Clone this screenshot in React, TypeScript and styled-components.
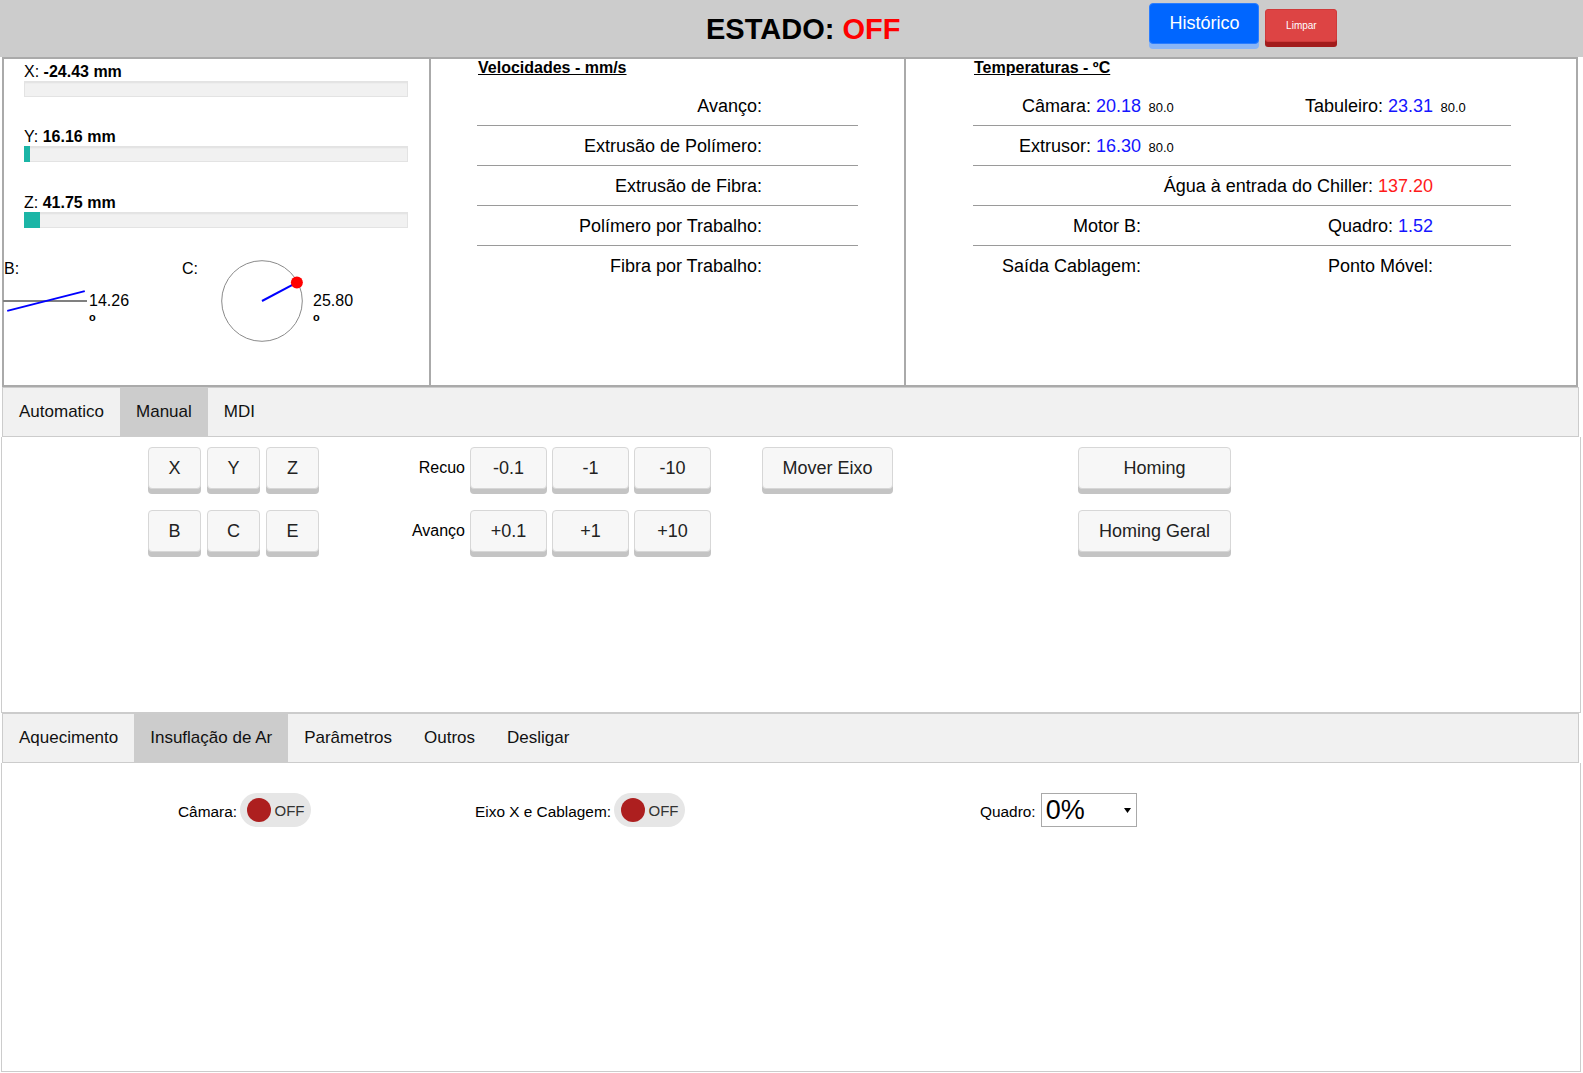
import React from "react";
import styled, { createGlobalStyle } from "styled-components";

const GlobalStyle = createGlobalStyle`
  html, body { margin: 0; padding: 0; background: #ffffff; overflow: hidden; }
  body { font-family: "Liberation Sans", Arial, sans-serif; color: #000; }
  *, *::before, *::after { box-sizing: border-box; }
  button { font-family: "Liberation Sans", Arial, sans-serif; cursor: pointer; }
`;

const Page = styled.div`
  width: 1583px;
`;

/* ---------- header ---------- */
const Header = styled.header`
  height: 57px;
  background: #cccccc;
  display: flex;
  align-items: flex-start;
  padding-left: 706px;
`;
const Title = styled.h1`
  margin: 13px 0 0;
  font-size: 29px;
  font-weight: bold;
  line-height: normal;
  white-space: nowrap;
`;
const Status = styled.span`
  color: #ff0000;
`;
const HistoryButton = styled.button`
  margin: 3px 0 0 249px;
  width: 110px;
  height: 41px;
  padding: 0;
  border: 1px solid #2a7dff;
  border-radius: 4px;
  background: #0066ff;
  color: #ffffff;
  font-size: 18px;
  box-shadow: 0 5px 0 #89b5f6;
`;
const ClearButton = styled.button`
  margin: 9px 0 0 6px;
  width: 72px;
  height: 33px;
  padding: 0;
  border: 1px solid #cf3a3a;
  border-radius: 3px;
  background: #dd4444;
  color: #ffffff;
  font-size: 10px;
  box-shadow: 0 5px 0 #a21c1c;
`;

/* ---------- top panels ---------- */
const Panels = styled.section`
  display: flex;
  margin-left: 2px;
  width: 1576px;
  height: 330px;
  border: 2px solid #aaaaaa;
`;
const Panel = styled.div<{ $width: number; $padLeft: number; $last?: boolean }>`
  flex: none;
  width: ${(p) => p.$width}px;
  padding-left: ${(p) => p.$padLeft}px;
  border-right: ${(p) => (p.$last ? "none" : "2px solid #aaaaaa")};
`;

const AxisList = styled.div`
  padding: 3.5px 0 0 20px;
  display: flex;
  flex-direction: column;
  gap: 31.5px;
`;
const AxisItem = styled.div`
  display: flex;
  flex-direction: column;
`;
const AxisLabel = styled.div`
  font-size: 16px;
  line-height: 18px;
  height: 18px;
  b {
    font-weight: bold;
  }
`;
const Track = styled.div`
  width: 384px;
  height: 16px;
  background: #f1f1f1;
  box-shadow: inset 0 0 0 1px #e3e3e3, inset 0 2px 2px rgba(0, 0, 0, 0.07);
`;
const Fill = styled.div`
  height: 100%;
  background: #1bb5a6;
`;

const GaugeRow = styled.div`
  display: flex;
  align-items: flex-start;
  margin-top: 32.5px;
`;
const LinearGauge = styled.div`
  width: 178px;
  display: flex;
  flex-direction: column;
`;
const GaugeLabel = styled.div<{ $width?: number }>`
  font-size: 16px;
  line-height: 18px;
  width: ${(p) => (p.$width ? `${p.$width}px` : "auto")};
  flex: none;
`;
const GaugeBody = styled.div`
  display: flex;
  align-items: flex-start;
  margin-top: 3px;
  margin-left: -1px;
`;
const GaugeValue = styled.div<{ $top: number; $left: number }>`
  font-size: 16px;
  line-height: 18px;
  margin-top: ${(p) => p.$top}px;
  margin-left: ${(p) => p.$left}px;
`;
const Degree = styled.span`
  display: block;
  font-size: 11px;
  font-weight: bold;
  line-height: 10px;
  padding-top: 2px;
`;
const RotaryGauge = styled.div`
  display: flex;
  align-items: flex-start;
`;

const PanelTitle = styled.div`
  margin-left: 1px;
  font-size: 16px;
  font-weight: bold;
  line-height: 18px;
  text-decoration: underline;
`;
const DataTable = styled.div<{ $width: number }>`
  margin-top: 9px;
  width: ${(p) => p.$width}px;
`;
const SpeedRow = styled.div<{ $last?: boolean }>`
  display: grid;
  grid-template-columns: 285px 1fr;
  height: 40px;
  padding: 9.5px 0;
  font-size: 18px;
  line-height: 20px;
  border-bottom: ${(p) => (p.$last ? "none" : "1px solid #9a9a9a")};
`;
const RightCell = styled.div<{ $span?: string }>`
  text-align: right;
  white-space: nowrap;
  grid-column: ${(p) => p.$span || "auto"};
`;
const TempRow = styled.div<{ $last?: boolean }>`
  display: grid;
  grid-template-columns: 168px 60px 232px 1fr;
  align-items: baseline;
  height: 40px;
  padding: 9.5px 0;
  font-size: 18px;
  line-height: 20px;
  border-bottom: ${(p) => (p.$last ? "none" : "1px solid #9a9a9a")};
`;
const SetPoint = styled.div`
  font-size: 13px;
  line-height: 14px;
  padding-left: 7.5px;
`;
const Value = styled.span<{ $color: string }>`
  color: ${(p) => p.$color};
`;

/* ---------- tabs ---------- */
const TabBar = styled.nav`
  display: flex;
  margin-left: 2px;
  width: 1577px;
  height: 50px;
  border: 1px solid #cccccc;
  background: #f1f1f1;
`;
const Tab = styled.button<{ $active?: boolean }>`
  height: 48px;
  padding: 0 16px;
  border: none;
  background: ${(p) => (p.$active ? "#cccccc" : "transparent")};
  font-size: 17px;
  line-height: 48px;
  color: #111;
`;
const TabContent = styled.div<{ $height: number }>`
  margin-left: 1px;
  width: 1580px;
  height: ${(p) => p.$height}px;
  border: 1px solid #cccccc;
  border-top: none;
`;
const ManualLayout = styled.div`
  display: flex;
  align-items: flex-start;
  padding: 10px 0 0 146px;
`;
const AxisGrid = styled.div`
  display: grid;
  grid-template-columns: repeat(3, 53px);
  column-gap: 6px;
  row-gap: 21px;
`;
const JogGrid = styled.div`
  margin-left: 92px;
  display: grid;
  grid-template-columns: 54px repeat(3, 77px);
  column-gap: 5px;
  row-gap: 21px;
  align-items: center;
`;
const JogLabel = styled.div`
  text-align: right;
  font-size: 16px;
`;
const KeyButton = styled.button<{ $width?: number }>`
  width: ${(p) => (p.$width ? `${p.$width}px` : "100%")};
  height: 42px;
  padding: 0;
  border: 1px solid #d7d7d7;
  border-radius: 4px;
  background: #f7f7f7;
  box-shadow: 0 5px 0 #c4c4c4;
  font-size: 18px;
  color: #222;
`;
const SoloColumn = styled.div<{ $gap: number }>`
  margin-left: ${(p) => p.$gap}px;
  display: flex;
  flex-direction: column;
  gap: 21px;
`;

const AirLayout = styled.div`
  display: grid;
  grid-template-columns: 297px 505px auto;
  align-items: start;
  padding: 30px 0 0 176px;
`;
const ControlGroup = styled.div<{ $gap: number }>`
  display: flex;
  align-items: center;
  gap: ${(p) => p.$gap}px;
`;
const ControlLabel = styled.span`
  font-size: 15.4px;
  white-space: nowrap;
  padding-top: 3px;
`;
const Toggle = styled.div`
  width: 71px;
  height: 34px;
  border-radius: 17px;
  background: #e6e6e6;
  display: flex;
  align-items: center;
  padding-left: 7px;
`;
const Knob = styled.span`
  width: 24px;
  height: 24px;
  border-radius: 50%;
  background: #ad1f1f;
  flex: none;
`;
const ToggleText = styled.span`
  margin-left: 3.5px;
  font-size: 15px;
  color: #333;
`;
const SelectBox = styled.div`
  width: 96px;
  height: 34px;
  border: 1px solid #a9a9a9;
  background: #fff;
  display: flex;
  align-items: center;
  justify-content: space-between;
  padding: 0 5px 0 4px;
  font-size: 27px;
`;

const axes = [
  { name: "X", value: "-24.43 mm", fill: 0 },
  { name: "Y", value: "16.16 mm", fill: 6 },
  { name: "Z", value: "41.75 mm", fill: 16 },
];

const speeds = [
  "Avanço:",
  "Extrusão de Polímero:",
  "Extrusão de Fibra:",
  "Polímero por Trabalho:",
  "Fibra por Trabalho:",
];

const BLUE = "#1515ff";
const RED = "#ff1a1a";

export default function App() {
  const cAngle = (28 * Math.PI) / 180;
  return (
    <Page>
      <GlobalStyle />
      <Header>
        <Title>
          ESTADO: <Status>OFF</Status>
        </Title>
        <HistoryButton>Histórico</HistoryButton>
        <ClearButton>Limpar</ClearButton>
      </Header>

      <Panels>
        <Panel $width={427} $padLeft={0}>
          <AxisList>
            {axes.map((a) => (
              <AxisItem key={a.name}>
                <AxisLabel>
                  {a.name}: <b>{a.value}</b>
                </AxisLabel>
                <Track>
                  <Fill style={{ width: `${a.fill}px` }} />
                </Track>
              </AxisItem>
            ))}
          </AxisList>
          <GaugeRow>
            <LinearGauge>
              <GaugeLabel>B:</GaugeLabel>
              <GaugeBody>
                <svg width="85" height="40" viewBox="0 0 85 40">
                  <line x1="0" y1="20" x2="84" y2="20" stroke="#808080" strokeWidth="2" />
                  <line
                    x1="3"
                    y1="20"
                    x2="83"
                    y2="20"
                    stroke="#0000ff"
                    strokeWidth="2"
                    transform="rotate(-14.26 43 20)"
                  />
                </svg>
                <GaugeValue $top={11} $left={1}>
                  14.26
                  <Degree>o</Degree>
                </GaugeValue>
              </GaugeBody>
            </LinearGauge>
            <RotaryGauge>
              <GaugeLabel $width={39}>C:</GaugeLabel>
              <svg width="82" height="82" viewBox="0 0 82 82">
                <circle cx="41" cy="41" r="40.3" fill="none" stroke="#8a8a8a" strokeWidth="1" />
                <line
                  x1="41"
                  y1="41"
                  x2={41 + 35 * Math.cos(cAngle)}
                  y2={41 - 35 * Math.sin(cAngle)}
                  stroke="#0000ff"
                  strokeWidth="2"
                />
                <circle
                  cx={41 + 39.5 * Math.cos(cAngle)}
                  cy={41 - 39.5 * Math.sin(cAngle)}
                  r="6"
                  fill="#ff0000"
                />
              </svg>
              <GaugeValue $top={32} $left={10}>
                25.80
                <Degree>o</Degree>
              </GaugeValue>
            </RotaryGauge>
          </GaugeRow>
        </Panel>

        <Panel $width={475} $padLeft={46}>
          <PanelTitle>Velocidades - mm/s</PanelTitle>
          <DataTable $width={381}>
            {speeds.map((s, i) => (
              <SpeedRow key={s} $last={i === speeds.length - 1}>
                <RightCell>{s}</RightCell>
                <div />
              </SpeedRow>
            ))}
          </DataTable>
        </Panel>

        <Panel $width={670} $padLeft={67} $last>
          <PanelTitle>Temperaturas - ºC</PanelTitle>
          <DataTable $width={538}>
            <TempRow>
              <RightCell>
                Câmara: <Value $color={BLUE}>20.18</Value>
              </RightCell>
              <SetPoint>80.0</SetPoint>
              <RightCell>
                Tabuleiro: <Value $color={BLUE}>23.31</Value>
              </RightCell>
              <SetPoint>80.0</SetPoint>
            </TempRow>
            <TempRow>
              <RightCell>
                Extrusor: <Value $color={BLUE}>16.30</Value>
              </RightCell>
              <SetPoint>80.0</SetPoint>
              <div />
              <div />
            </TempRow>
            <TempRow>
              <RightCell $span="1 / 4">
                Água à entrada do Chiller: <Value $color={RED}>137.20</Value>
              </RightCell>
              <div />
            </TempRow>
            <TempRow>
              <RightCell>Motor B:</RightCell>
              <div />
              <RightCell>
                Quadro: <Value $color={BLUE}>1.52</Value>
              </RightCell>
              <div />
            </TempRow>
            <TempRow $last>
              <RightCell>Saída Cablagem:</RightCell>
              <div />
              <RightCell>Ponto Móvel:</RightCell>
              <div />
            </TempRow>
          </DataTable>
        </Panel>
      </Panels>

      <TabBar>
        <Tab>Automatico</Tab>
        <Tab $active>Manual</Tab>
        <Tab>MDI</Tab>
      </TabBar>
      <TabContent $height={276}>
        <ManualLayout>
          <AxisGrid>
            {["X", "Y", "Z", "B", "C", "E"].map((k) => (
              <KeyButton key={k}>{k}</KeyButton>
            ))}
          </AxisGrid>
          <JogGrid>
            <JogLabel>Recuo</JogLabel>
            <KeyButton>-0.1</KeyButton>
            <KeyButton>-1</KeyButton>
            <KeyButton>-10</KeyButton>
            <JogLabel>Avanço</JogLabel>
            <KeyButton>+0.1</KeyButton>
            <KeyButton>+1</KeyButton>
            <KeyButton>+10</KeyButton>
          </JogGrid>
          <SoloColumn $gap={51}>
            <KeyButton $width={131}>Mover Eixo</KeyButton>
          </SoloColumn>
          <SoloColumn $gap={185}>
            <KeyButton $width={153}>Homing</KeyButton>
            <KeyButton $width={153}>Homing Geral</KeyButton>
          </SoloColumn>
        </ManualLayout>
      </TabContent>

      <TabBar>
        <Tab>Aquecimento</Tab>
        <Tab $active>Insuflação de Ar</Tab>
        <Tab>Parâmetros</Tab>
        <Tab>Outros</Tab>
        <Tab>Desligar</Tab>
      </TabBar>
      <TabContent $height={309}>
        <AirLayout>
          <ControlGroup $gap={3}>
            <ControlLabel>Câmara:</ControlLabel>
            <Toggle>
              <Knob />
              <ToggleText>OFF</ToggleText>
            </Toggle>
          </ControlGroup>
          <ControlGroup $gap={3}>
            <ControlLabel>Eixo X e Cablagem:</ControlLabel>
            <Toggle>
              <Knob />
              <ToggleText>OFF</ToggleText>
            </Toggle>
          </ControlGroup>
          <ControlGroup $gap={5}>
            <ControlLabel>Quadro:</ControlLabel>
            <SelectBox>
              <span>0%</span>
              <svg width="7" height="5" viewBox="0 0 7 5">
                <path d="M0 0 L7 0 L3.5 5 Z" fill="#000" />
              </svg>
            </SelectBox>
          </ControlGroup>
        </AirLayout>
      </TabContent>
    </Page>
  );
}
